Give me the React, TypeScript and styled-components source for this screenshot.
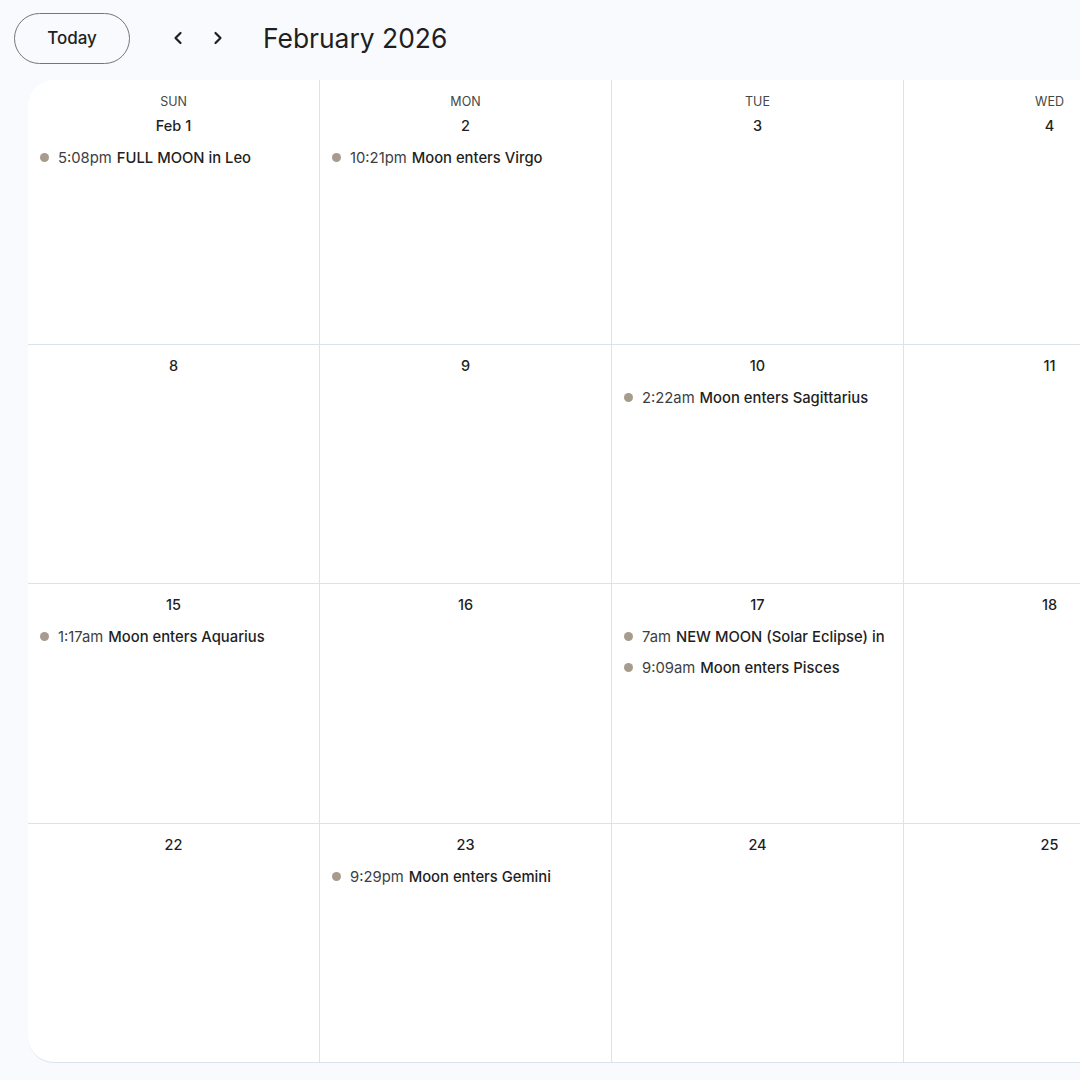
import styled, { createGlobalStyle } from 'styled-components'

const GlobalStyle = createGlobalStyle`
  html, body {
    margin: 0;
    padding: 0;
    background: #f8fafd;
    font-family: Inter, Roboto, 'Liberation Sans', Arial, sans-serif;
    color: #1f1f1f;
  }
  body {
    width: 1080px;
    height: 1080px;
    overflow: hidden;
  }
`

interface CalEvent {
  time: string
  title: string
}

interface Day {
  weekday?: string
  label: string
  events: CalEvent[]
}

const weeks: Day[][] = [
  [
    { weekday: 'SUN', label: 'Feb 1', events: [{ time: '5:08pm', title: 'FULL MOON in Leo' }] },
    { weekday: 'MON', label: '2', events: [{ time: '10:21pm', title: 'Moon enters Virgo' }] },
    { weekday: 'TUE', label: '3', events: [] },
    { weekday: 'WED', label: '4', events: [] },
  ],
  [
    { label: '8', events: [] },
    { label: '9', events: [] },
    { label: '10', events: [{ time: '2:22am', title: 'Moon enters Sagittarius' }] },
    { label: '11', events: [] },
  ],
  [
    { label: '15', events: [{ time: '1:17am', title: 'Moon enters Aquarius' }] },
    { label: '16', events: [] },
    {
      label: '17',
      events: [
        { time: '7am', title: 'NEW MOON (Solar Eclipse) in' },
        { time: '9:09am', title: 'Moon enters Pisces' },
      ],
    },
    { label: '18', events: [] },
  ],
  [
    { label: '22', events: [] },
    { label: '23', events: [{ time: '9:29pm', title: 'Moon enters Gemini' }] },
    { label: '24', events: [] },
    { label: '25', events: [] },
  ],
]

const Page = styled.div`
  display: flex;
  flex-direction: column;
  height: 1080px;
`

const Toolbar = styled.header`
  display: flex;
  align-items: center;
  height: 80px;
  padding-left: 14px;
  box-sizing: border-box;
  flex-shrink: 0;
`

const TodayButton = styled.button`
  width: 116px;
  height: 51px;
  border: 1px solid #747775;
  border-radius: 26px;
  background: transparent;
  font-family: Inter, Roboto, 'Liberation Sans', Arial, sans-serif;
  font-size: 17px;
  font-weight: 500;
  color: #1f1f1f;
  margin-top: -4px;
`

const NavGroup = styled.div`
  display: flex;
  align-items: center;
  gap: 12px;
  margin-left: 34px;
  margin-top: -4px;
`

const NavButton = styled.button`
  width: 28px;
  height: 28px;
  border: none;
  background: transparent;
  padding: 0;
  display: flex;
  align-items: center;
  justify-content: center;
  color: #1f1f1f;
`

const Title = styled.h1`
  margin: -4px 0 0 31px;
  font-size: 26.4px;
  font-weight: 400;
  color: #1f1f1f;
  letter-spacing: 0;
`

const CardWrap = styled.div`
  padding-left: 28px;
  overflow: hidden;
  flex-shrink: 0;
`

const Card = styled.div`
  width: 1168px;
  height: 983px;
  background: #fff;
  border-radius: 26px 0 0 26px;
  border-bottom: 1px solid #dde3ea;
  box-sizing: border-box;
  display: grid;
  grid-template-columns: repeat(4, 292px);
  grid-template-rows: 265px 239px 240px 238px;
  overflow: hidden;
`

const Cell = styled.div<{ $lastRow: boolean }>`
  border-right: 1px solid #dde3ea;
  border-bottom: ${(p) => (p.$lastRow ? 'none' : '1px solid #dde3ea')};
  display: flex;
  flex-direction: column;
  align-items: stretch;
  padding-top: 12px;
  box-sizing: border-box;
  min-width: 0;
`

const Weekday = styled.div`
  text-align: center;
  font-size: 12.5px;
  font-weight: 400;
  color: #444746;
  line-height: 16px;
  margin: 2px 0 7px;
`

const DateLabel = styled.div`
  text-align: center;
  font-size: 14.5px;
  font-weight: 500;
  color: #1f1f1f;
  line-height: 18px;
  margin-bottom: 7px;
`

const EventRow = styled.div`
  display: flex;
  align-items: center;
  height: 31px;
  padding: 0 12px;
  white-space: nowrap;
  overflow: hidden;
  font-size: 14.8px;
  line-height: 20px;
`

const Dot = styled.span`
  width: 9px;
  height: 9px;
  border-radius: 50%;
  background: #a79b8e;
  flex-shrink: 0;
  margin-right: 9px;
`

const Time = styled.span`
  color: #3c4043;
  font-weight: 400;
  margin-right: 5px;
`

const EventTitle = styled.span`
  color: #1f1f1f;
  font-weight: 500;
  overflow: hidden;
`

const Chevron = ({ dir }: { dir: 'left' | 'right' }) => (
  <svg width="24" height="24" viewBox="0 0 24 24" fill="none">
    <path
      d={dir === 'left' ? 'M14.5 7l-5 5 5 5' : 'M9.5 7l5 5-5 5'}
      stroke="#1f1f1f"
      strokeWidth="2.2"
      strokeLinecap="round"
      strokeLinejoin="round"
    />
  </svg>
)

export default function App() {
  return (
    <>
      <GlobalStyle />
      <Page>
        <Toolbar>
          <TodayButton>Today</TodayButton>
          <NavGroup>
            <NavButton aria-label="Previous month">
              <Chevron dir="left" />
            </NavButton>
            <NavButton aria-label="Next month">
              <Chevron dir="right" />
            </NavButton>
          </NavGroup>
          <Title>February 2026</Title>
        </Toolbar>
        <CardWrap>
          <Card>
            {weeks.map((week, wi) =>
              week.map((day, di) => (
                <Cell key={`${wi}-${di}`} $lastRow={wi === weeks.length - 1}>
                  {day.weekday && <Weekday>{day.weekday}</Weekday>}
                  <DateLabel>{day.label}</DateLabel>
                  {day.events.map((ev, ei) => (
                    <EventRow key={ei}>
                      <Dot />
                      <Time>{ev.time}</Time>
                      <EventTitle>{ev.title}</EventTitle>
                    </EventRow>
                  ))}
                </Cell>
              ))
            )}
          </Card>
        </CardWrap>
      </Page>
    </>
  )
}
